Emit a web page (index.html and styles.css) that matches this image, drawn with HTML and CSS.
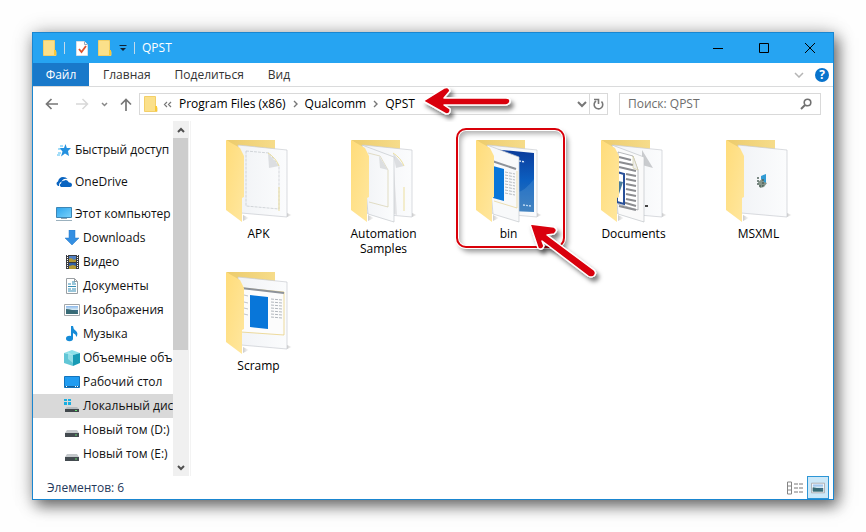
FILE: index.html
```html
<!DOCTYPE html>
<html lang="ru">
<head>
<meta charset="utf-8">
<meta name="viewport" content="width=device-width, initial-scale=1">
<title>QPST</title>
<link rel="stylesheet" href="styles.css">
</head>
<body>
<svg class="defs" width="0" height="0" aria-hidden="true">
  <defs>
    <linearGradient id="flap" x1="0" y1="0" x2="1" y2="1"><stop offset="0" stop-color="#ffdc7a"/><stop offset="1" stop-color="#ffe79f"/></linearGradient>
    <linearGradient id="back" x1="0" y1="0" x2="1" y2="0"><stop offset="0" stop-color="#eccb6c"/><stop offset="1" stop-color="#f6dc8a"/></linearGradient>
    <linearGradient id="paper" x1="0" y1="0" x2="1" y2="0"><stop offset="0" stop-color="#f1f3f6"/><stop offset="1" stop-color="#fbfcfd"/></linearGradient>
    <linearGradient id="blue" x1="0" y1="0" x2="0" y2="1"><stop offset="0" stop-color="#0a3a9a"/><stop offset=".5" stop-color="#0c5fc0"/><stop offset="1" stop-color="#3477b8"/></linearGradient>
    <linearGradient id="screen" x1="0" y1="0" x2="1" y2="1"><stop offset="0" stop-color="#2ba4ee"/><stop offset="1" stop-color="#7bd2fa"/></linearGradient>
    <linearGradient id="sky" x1="0" y1="0" x2="0" y2="1"><stop offset="0" stop-color="#8bb8ec"/><stop offset=".45" stop-color="#d5e9f2"/><stop offset=".55" stop-color="#3b6a84"/><stop offset="1" stop-color="#4e8a90"/></linearGradient>
    <linearGradient id="shade" x1="0" y1="0" x2="1" y2="0"><stop offset="0" stop-color="#ccc"/><stop offset="1" stop-color="#fff"/></linearGradient>
    <filter id="drop" x="-30%" y="-30%" width="170%" height="180%"><feDropShadow dx="3" dy="4" stdDeviation="2" flood-color="#000" flood-opacity=".5"/></filter>
    <symbol id="mini-folder" viewBox="0 0 14 16">
      <path d="M.5.5h11v11l1.500 0v4H.5z" fill="#fbe08a" stroke="#f3cf68"/>
      <path d="M11 10h2v5h-2z" fill="#f9c936"/>
    </symbol>
    <symbol id="folder-back" viewBox="0 0 71 84">
      <path d="M64 78l5-2-5-2z" fill="url(#shade)"/><path d="M20 82l6-3-6-3z" fill="url(#shade)"/>
      <path d="M3 1h49v10H16z" fill="url(#back)"/>
    </symbol>
    <symbol id="folder-front" viewBox="0 0 71 84"><path d="M3 1l14 8 4 8v41l-2 1v24L3 71z" fill="url(#flap)"/></symbol>
    <symbol id="sheet" viewBox="0 0 71 84">
      <path d="M15 6l49 5v67l-46-4z" fill="url(#paper)" stroke="#c9ccd1" stroke-width=".7"/>
    </symbol>
    <symbol id="app-page" viewBox="0 0 71 84">
      <path d="M18 17l43 4v43l-43-3" fill="#fcfcfc" stroke="#e7cb72" stroke-width=".7"/>
      <path d="M18 17l43 5" stroke="#8d9299" stroke-width="2"/>
      <path d="M27 24l18 2v32l-18-2z" fill="#0876d9"/>
      <path d="M48 28l11 1m-11 2l11 1m-11 2l11 1m-11 2l11 1m-11 2l11 1m-11 2l11 1m-11 2l11 1" stroke="#b2b7bd" stroke-dasharray="3 1"/>
      <path d="M21 24l4 1m-4 6l4 1m-4 5l4 1m-4 5l4 1" stroke="#c2c5c9"/>
    </symbol>
    <symbol id="drive" viewBox="0 0 16 16"><path d="M3 8h10l2 3H1z" fill="#c4c8cb"/><path d="M1 11h14v4H1z" fill="#444b50"/><path d="M11 13h2" stroke="#63d36c"/></symbol>
    <symbol id="picture" viewBox="0 0 16 16"><path d="M.5 2.500h15v11H.5z" fill="#fff" stroke="#a3a7aa"/><path d="M2 4h12v8H2z" fill="url(#sky)"/><path d="M2 7q6 0 12 4v1H2z" fill="#386b76"/></symbol>
  </defs>
</svg>

<main class="window">
  <header class="titlebar">
    <svg width="14" height="16"><use href="#mini-folder"/></svg>
    <span class="divider"></span>
    <button class="quick check" aria-label="Свойства"><svg width="12" height="15" viewBox="0 0 12 15"><path d="M.5.5h8l3 3v11H.5z" fill="#fff" stroke="#d9dfe6"/><path d="M8.500.5v3h3" fill="none" stroke="#9aa9b8"/><path d="M3 8l2.500 3L10 5" fill="none" stroke="#e0522f" stroke-width="1.800"/></svg></button>
    <button class="quick" aria-label="Новая папка"><svg width="14" height="16"><use href="#mini-folder"/></svg></button>
    <button class="quick more" aria-label="Настройка панели"><svg width="8" height="8" viewBox="0 0 8 8"><path d="M.5 1.500h7" stroke="#102235"/><path d="M1 4h6L4 7z" fill="#102235"/></svg></button>
    <span class="divider second"></span>
    <h1 class="title">QPST</h1>
    <div class="controls">
      <button aria-label="Свернуть"><svg width="10" height="10"><path d="M0 5.500h10" stroke="#000"/></svg></button>
      <button aria-label="Развернуть"><svg width="10" height="10"><path d="M.5.5h9v9h-9z" fill="none" stroke="#000"/></svg></button>
      <button aria-label="Закрыть"><svg width="10" height="10"><path d="M0 0l10 10M10 0L0 10" stroke="#000"/></svg></button>
    </div>
  </header>

  <nav class="tabs" aria-label="Лента">
    <button class="tab file">Файл</button>
    <button class="tab">Главная</button>
    <button class="tab">Поделиться</button>
    <button class="tab">Вид</button>
    <button class="expand" aria-label="Развернуть ленту"><svg width="10" height="6"><path d="M1 1l4 4 4-4" fill="none" stroke="#b5b5b5" stroke-width="1.500"/></svg></button>
    <button class="help" aria-label="Справка">?</button>
  </nav>

  <div class="toolbar">
    <div class="history">
      <button aria-label="Назад"><svg width="14" height="12" viewBox="0 0 14 12"><path d="M13 6H2M6.500 1l-5 5 5 5" fill="none" stroke="#777" stroke-width="1.700"/></svg></button>
      <button class="forward" aria-label="Вперёд"><svg width="14" height="12" viewBox="0 0 14 12"><path d="M1 6h11M7.500 1l5 5-5 5" fill="none" stroke="#d8d8d8" stroke-width="1.500"/></svg></button>
      <button class="recent" aria-label="Последние"><svg width="7" height="5"><path d="M1 1l2.500 2.500L6 1" fill="none" stroke="#888" stroke-width="1.500"/></svg></button>
      <button aria-label="Вверх"><svg width="12" height="13" viewBox="0 0 12 13"><path d="M6 13V2M1 6.500l5-5 5 5" fill="none" stroke="#777" stroke-width="1.700"/></svg></button>
    </div>
    <div class="address">
      <svg class="place" width="14" height="16"><use href="#mini-folder"/></svg>
      <svg class="skip" width="9" height="7"><path d="M4 1L1.500 3.500 4 6M8 1L5.500 3.500 8 6" fill="none" stroke="#777" stroke-width="1.200"/></svg>
      <a href="#">Program Files (x86)</a>
      <svg class="sep" width="5" height="8"><path d="M1 1l3 3-3 3" fill="none" stroke="#777" stroke-width="1.400"/></svg>
      <a href="#">Qualcomm</a>
      <svg class="sep" width="5" height="8"><path d="M1 1l3 3-3 3" fill="none" stroke="#777" stroke-width="1.400"/></svg>
      <a class="here" href="#">QPST</a>
      <svg class="path-arrow" width="100" height="36" viewBox="0 0 100 36" aria-hidden="true">
        <g filter="url(#drop)"><path d="M3 15L24 2Q29 0 30 5L24 12H86Q90 12 90 15T86 19H24L30 23Q31 28 26 28z" fill="#d90009" stroke="#fff" stroke-width="1.500" stroke-linejoin="round"/></g>
      </svg>
      <button class="drop" aria-label="Предыдущие расположения"><svg width="10" height="7"><path d="M1 1l4 4 4-4" fill="none" stroke="#777" stroke-width="2"/></svg></button>
      <button class="refresh" aria-label="Обновить"><svg width="11" height="12" viewBox="0 0 11 12"><path d="M3 3A4.300 4.300 0 1 0 8.500 3.500" fill="none" stroke="#777" stroke-width="1.600"/><path d="M1 1.500h4.500V6" fill="none" stroke="#777" stroke-width="1.600"/></svg></button>
    </div>
    <label class="search"><input type="text" placeholder="Поиск: QPST" aria-label="Поиск: QPST"><svg width="12" height="12" viewBox="0 0 12 12"><circle cx="7.500" cy="4.500" r="3.300" fill="none" stroke="#707070" stroke-width="1.600"/><path d="M5 7L1 11" stroke="#707070" stroke-width="2"/></svg></label>
  </div>

  <div class="content">
    <aside class="side">
      <ul class="tree">
        <li class="root"><svg width="16" height="16" viewBox="0 0 16 16"><path d="M9.500 2l1.300 4H15l-3 3 1 5-4-2.500-4 3 1.500-5-3-3.500H8z" fill="#2490df"/><path d="M4 4h3M2 7h3M2 11h3M1 13h3" stroke="#4bbcf2"/></svg>Быстрый доступ</li>
        <li class="root"><svg width="16" height="16" viewBox="0 0 16 16"><path d="M2 12Q-1 9 2 7.500 3 3 7 3q3 0 4.500 2Q7 4 5.500 8 3 8 3 12z" fill="#0a64c0"/><path d="M5 13Q2.500 11 5 9.500 5.500 6.500 8.500 6.500q2-1.500 4.500 2 3-.2 3 2.500 0 2-2 2z" fill="#0a64c0"/></svg>OneDrive</li>
        <li class="root"><svg width="16" height="16" viewBox="0 0 16 16"><path d="M.5 1.500h15v10H.5z" fill="url(#screen)" stroke="#3d86b5"/><path d="M5 12h6v1H5z" fill="#91a6b3"/><path d="M0 14.500h16" stroke="#9bb1be"/></svg>Этот компьютер</li>
        <li><svg width="16" height="16" viewBox="0 0 16 16"><path d="M5 0h6v8h4l-7 7-7-7h4z" fill="#348fe2" stroke="#2679c8" stroke-width=".5"/></svg>Downloads</li>
        <li><svg width="16" height="16" viewBox="0 0 16 16"><path d="M2 1h13v14H2z" fill="#3b3c3f"/><path d="M5 2h7v6H5z" fill="#517fc2"/><path d="M5 9h7v6H5z" fill="#315fa5"/><path d="M5 5l2-1 3 2 2-1v3H5zM5 12l4-1 3 1v3H5z" fill="#b39933"/><path d="M3.500 1v14M13.500 1v14" stroke="#fff" stroke-dasharray="1 1"/></svg>Видео</li>
        <li><svg width="16" height="16" viewBox="0 0 16 16"><path d="M2.500.5h8l3 3v12h-11z" fill="#fff" stroke="#9a9fa3"/><path d="M10.500.5v3h3" fill="none" stroke="#9a9fa3"/><path d="M4 6h3m1-2h3M8 6h4M4 8.500h8M4 11h3m1 0h4M4 13h8" stroke="#348db5"/></svg>Документы</li>
        <li><svg width="16" height="16"><use href="#picture"/></svg>Изображения</li>
        <li><svg width="16" height="16" viewBox="0 0 16 16"><ellipse cx="5.500" cy="12.500" rx="3.500" ry="2.800" fill="#168bd7"/><path d="M7 13V0h2q0 3 3 5 2.500 2 .5 6-.5-3-3.500-4v6z" fill="#168bd7"/></svg>Музыка</li>
        <li><svg width="16" height="16" viewBox="0 0 16 16"><path d="M0 3l8-3 8 3-7 2z" fill="#8ce1ea"/><path d="M0 3l9 2v11l-9-3z" fill="#61c6d6"/><path d="M9 5l7-2v10l-7 3z" fill="#189bb5"/><path d="M4 2l5 3v8L4 9z" fill="#b6eef2" opacity=".6"/></svg>Объемные объ</li>
        <li><svg width="16" height="16" viewBox="0 0 16 16"><path d="M.5 2.500h15v11H.5z" fill="#209cf1" stroke="#1274bd"/><path d="M1 12.500h14" stroke="#176098"/><path d="M2 12.500h1m8 0h1m1 0h1" stroke="#fff"/></svg>Рабочий стол</li>
        <li class="selected"><svg width="16" height="16" viewBox="0 0 16 16"><path d="M3 9h10l2 2H1z" fill="#b7bcc0"/><path d="M1 11h14v3H1z" fill="#41484c"/><path d="M11 12.500h2" stroke="#65e072"/><path d="M0 1h3v2H0zm4 0h3v2H4zM0 4h3v3H0zm4 0h3v3H4z" fill="#18aee0"/></svg>Локальный дис</li>
        <li><svg width="16" height="16"><use href="#drive"/></svg>Новый том (D:)</li>
        <li><svg width="16" height="16"><use href="#drive"/></svg>Новый том (E:)</li>
      </ul>
      <div class="scrollbar" aria-hidden="true">
        <span class="end"><svg width="8" height="6"><path d="M1 5l3-3 3 3" fill="none" stroke="#505050" stroke-width="2"/></svg></span>
        <span class="track"><span class="thumb"></span></span>
        <span class="end"><svg width="8" height="6"><path d="M1 1l3 3 3-3" fill="none" stroke="#505050" stroke-width="2"/></svg></span>
      </div>
    </aside>

    <section class="files" aria-label="Файлы">
      <a class="item" href="#">
        <svg width="71" height="84" viewBox="0 0 71 84"><use href="#folder-back"/><use href="#sheet"/><path d="M23 12l23 2 10 13v43l-33-3z" fill="none" stroke="#b9bdc2" stroke-width=".6" stroke-dasharray="3 1"/><path d="M45 14l11 13-10 2z" fill="#dcdee1"/><path d="M45 14q8 5 11 13M56 48v24" fill="none" stroke="#ecdf9e"/><use href="#folder-front"/></svg>
        <span>APK</span>
      </a>
      <a class="item" href="#">
        <svg width="71" height="84" viewBox="0 0 71 84"><use href="#folder-back"/><use href="#sheet"/><path d="M45 14l11 13-8 2z" fill="#dcdee1"/><path d="M46 29l3 47-3-1z" fill="#e2e3e5"/><path d="M45 14q8 5 11 13M56 48v24" fill="none" stroke="#ecdf9e"/><path d="M14 6l32 12v65l-26-8z" fill="url(#paper)" stroke="#c4c8cd" stroke-width=".7"/><path d="M20 14l12 3 8 14v37l-19-5" fill="none" stroke="#d7d0ae" stroke-width=".7"/><path d="M31 17l9 14-8-2z" fill="#dcdee0"/><use href="#folder-front"/></svg>
        <span>Automation Samples</span>
      </a>
      <a class="item marked" href="#">
        <svg width="71" height="84" viewBox="0 0 71 84"><use href="#folder-back"/><use href="#sheet"/><path d="M18 10l43 4v59l-19-1z" fill="url(#blue)"/><path d="M46 22l6 1m-2 43l8 1" stroke="#d5e8fb" stroke-width="1.500" stroke-dasharray="2 1"/><path d="M43 54q9-2 18-14v33H43z" fill="#73acdb" opacity=".25"/><path d="M14 6l32 12v65l-26-8z" fill="#f8f9fa" stroke="#c4c8cd" stroke-width=".7"/><path d="M19 22l24 8" stroke="#8d9299" stroke-width="2"/><path d="M20 27l11 3v32l-11-3z" fill="#0876d9"/><path d="M32 33l10 2m-10 1l10 2m-10 1l10 2m-10 1l10 2m-10 1l10 2m-10 1l10 2m-10 1l10 2m-10 1l10 2" stroke="#aeb3b9" stroke-width=".9" stroke-dasharray="3 1"/><path d="M21 62l23 7V32" fill="none" stroke="#e5d192" stroke-width=".7"/><use href="#folder-front"/></svg>
        <span>bin</span>
        <span class="frame"></span>
        <svg class="item-arrow" width="86" height="70" viewBox="0 0 86 70" aria-hidden="true"><g filter="url(#drop)"><path d="M5 4L29 7Q34 10 29 14L22 15 69 50Q72 53 69 56 66 58 63 56L17 21 19 26Q17 31 13 28z" fill="#d90009" stroke="#fff" stroke-width="1.500" stroke-linejoin="round"/></g></svg>
      </a>
      <a class="item" href="#">
        <svg width="71" height="84" viewBox="0 0 71 84"><use href="#folder-back"/><use href="#sheet"/><path d="M44 11l11 18-11-3z" fill="#c9cbce"/><path d="M47 67h3" stroke="#444" stroke-width="2"/><path d="M14 6l32 12v65l-26-8z" fill="#fafafa" stroke="#c0c4c9" stroke-width=".7"/><path d="M20 13l15 4 5 14v40l-20-6z" fill="#fff" stroke="#9a9ca0" stroke-width=".7"/><path d="M21 18l12 3m-12 2l14 3m-14 2l17 4m-10 3l10 2m-10 3l10 2m-10 3l10 2m-10 3l10 2m-10 3l10 2m-10 3l10 2m-17 0l17 5m-17 0l17 4" stroke="#8c8d91" stroke-width="2"/><path d="M19 33l7 2v30l-7-2z" fill="#fff" stroke="#284f98" stroke-width="2"/><path d="M20 42l5 1-4 12" fill="#497b9a"/><path d="M35 17v12l5 2z" fill="#eee" stroke="#ceca9b" stroke-width=".6"/><use href="#folder-front"/></svg>
        <span>Documents</span>
      </a>
      <a class="item" href="#">
        <svg width="71" height="84" viewBox="0 0 71 84"><use href="#folder-back"/><use href="#sheet"/><path d="M38 37l5-2v9l-5 1z" fill="#319bd4"/><path d="M35 43l4-3 2 3 3 1-3 4-4 1z" fill="#84958a"/><path d="M35 38v8m5-6v7m-4 0h4" stroke="#53665e" stroke-width="1.500" stroke-dasharray="2 1"/><use href="#folder-front"/></svg>
        <span>MSXML</span>
      </a>
      <a class="item" href="#">
        <svg width="71" height="84" viewBox="0 0 71 84"><use href="#folder-back"/><use href="#sheet"/><use href="#app-page"/><use href="#folder-front"/></svg>
        <span>Scramp</span>
      </a>
    </section>
  </div>

  <footer class="status">
    <span class="count">Элементов: 6</span>
    <button class="view" aria-label="Таблица"><svg width="17" height="14" viewBox="0 0 17 14"><path d="M.5 1h4v12h-4zM.5 5h4m-4 4h4" fill="none" stroke="#858585"/><path d="M7 3h4m1 0h4M7 7h4m1 0h4M7 11h4m1 0h4" stroke="#777"/></svg></button>
    <button class="view active" aria-label="Крупные значки"><svg width="14" height="14" viewBox="0 0 16 16"><use href="#picture" width="16" height="16"/></svg></button>
  </footer>
</main>
</body>
</html>
```
FILE: styles.css
```css
* { box-sizing: border-box; }
body {
  margin: 0;
  min-height: 100vh;
  padding: 32px;
  display: flex;
  background: #fefefe;
  font: 12px/16px "Open Sans", "Noto Sans", sans-serif;
  color: #111;
}
svg { display: block; flex: none; }
.defs { position: absolute; }
button { border: 0; padding: 0; background: none; font: inherit; color: inherit; display: grid; place-items: center; }
a { color: inherit; text-decoration: none; }
.window {
  flex: 1;
  min-width: 0;
  display: flex;
  flex-direction: column;
  border: 1px solid #1a86d0;
  background: #fff;
  box-shadow: 4px 6px 14px rgba(0, 0, 0, .55), 0 0 20px rgba(0, 0, 0, .2);
}
.titlebar { height: 30px; display: flex; align-items: center; padding-left: 10px; background: #26a4f2; }
.divider { width: 1px; height: 12px; margin: 0 11px 0 7px; background: #c2daea; }
.divider.second { margin: 0 7px; }
.quick { margin-right: 10px; }
.quick.more { margin: 0 0 0 -3px; }
.title { margin: 0; font: inherit; color: #fff; }
.controls { margin-left: auto; display: flex; align-self: stretch; }
.controls button { width: 46px; }

.tabs { height: 24px; display: flex; align-items: stretch; border-bottom: 1px solid #dadbdc; color: #333; }
.tab { padding: 0 12px; }
.tab.file { width: 56px; margin-right: 2px; background: #1979ca; color: #fff; }
.expand { margin-left: auto; width: 20px; }
.help { align-self: center; width: 14px; height: 14px; margin: 0 4px 0 6px; border-radius: 50%; background: #0873cc; color: #fff; font-weight: bold; line-height: 14px; }

.toolbar { height: 34px; display: flex; align-items: center; padding: 0 12px; }
.history { width: 94px; flex: none; display: flex; align-items: center; }
.history .forward { margin-left: 16px; }
.history .recent { margin: 0 12px; }
.address { position: relative; flex: 1; height: 22px; display: flex; align-items: center; border: 1px solid #d9d9d9; color: #000; white-space: nowrap; }
.place { margin: 0 5px 0 4px; }
.skip { margin-right: 7px; }
.sep { margin: 0 7px; }
.path-arrow { position: absolute; left: 280px; top: -8px; }
.drop { margin-left: auto; margin-right: 2px; }
.refresh { width: 18px; border-left: 1px solid #d9d9d9; align-self: stretch; }
.search { flex: 0 1 202px; height: 22px; margin-left: 11px; padding: 0 8px; display: flex; align-items: center; border: 1px solid #d9d9d9; }
.search input { flex: 1; min-width: 0; padding: 0; border: 0; outline: 0; font: inherit; background: none; }
.search input::placeholder { color: #6d6d6d; opacity: 1; }

.content { flex: 1; display: flex; min-height: 0; }
.side { width: 158px; flex: none; display: flex; border-right: 1px solid #f3f3f3; }
.tree { flex: 1; min-width: 0; margin: 0; padding: 13px 0 0; list-style: none; }
.tree li { height: 24px; padding-left: 31px; display: flex; align-items: center; gap: 3px; white-space: nowrap; }
.tree .root { height: 32px; padding-left: 23px; }
.tree .root:nth-child(3) { margin-bottom: -4px; }
.tree .selected { background: #d9d9d9; }
.scrollbar { width: 16px; margin-right: 1px; flex: none; display: flex; flex-direction: column; background: #f0f0f0; }
.end { height: 17px; display: grid; place-items: center; }
.track { flex: 1; }
.thumb { display: block; width: 15px; height: 66%; background: #cdcdcd; }

.files { flex: 1; display: grid; grid-template-columns: repeat(auto-fill, 125px); grid-auto-rows: 132px; align-content: start; padding: 7px 0 0 5px; }
.item { position: relative; display: flex; flex-direction: column; align-items: center; padding: 11px 22px 0; line-height: 15px; text-align: center; gap: 3px; color: #000; }
.frame { position: absolute; left: 10px; top: 0; width: 109px; height: 120px; border: 2px solid #d90009; border-radius: 10px; box-shadow: 0 0 0 1px #fff, 3px 4px 5px rgba(0, 0, 0, .4), inset 0 0 0 1px #fff, inset 3px 4px 5px rgba(0, 0, 0, .3); }
.item-arrow { position: absolute; left: 79px; top: 92px; }

.status { height: 23px; flex: none; display: flex; align-items: center; color: #24395b; }
.count { margin-left: 14px; margin-right: auto; }
.view { width: 22px; height: 23px; }
.view.active { margin: 0 4px 0 1px; background: #cce8f8; border: 1px solid #2d96d6; }
```
